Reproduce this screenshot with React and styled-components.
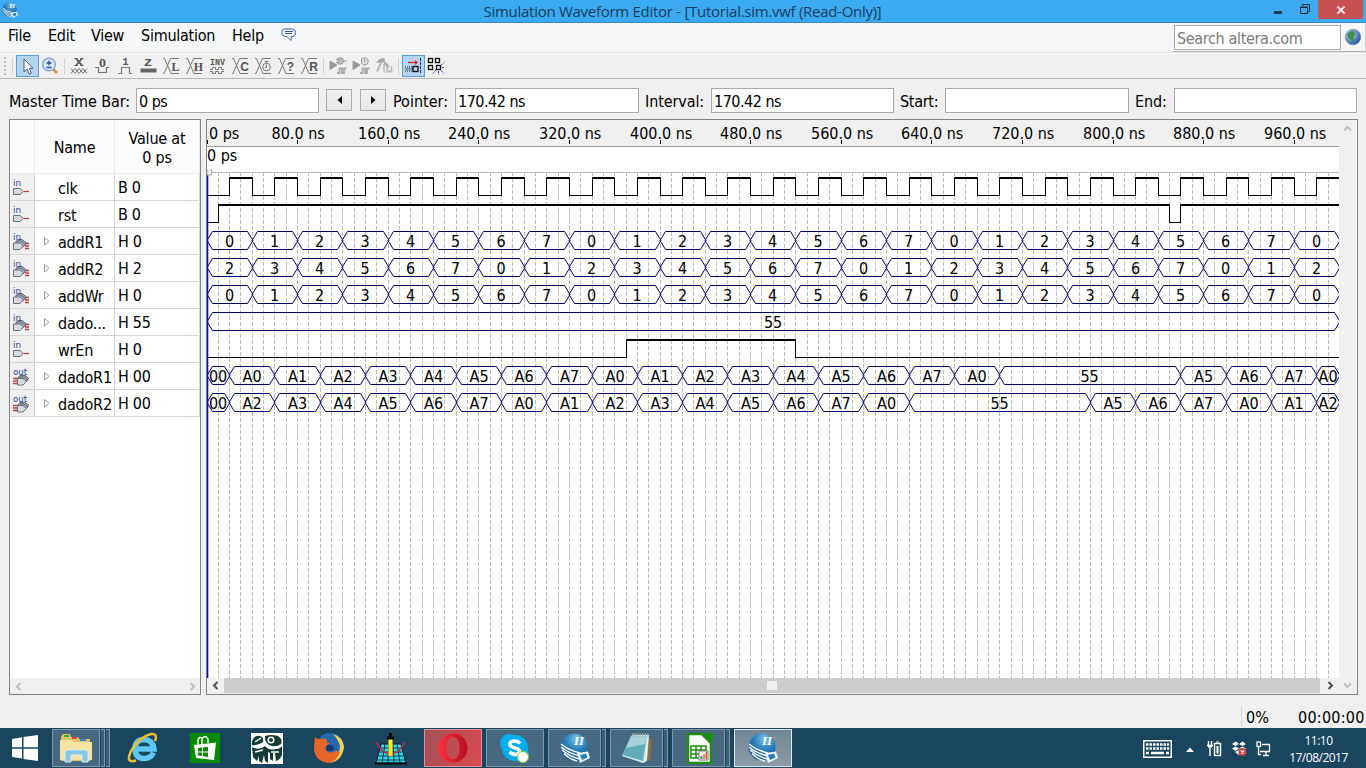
import React from "react";
import styled, { createGlobalStyle } from "styled-components";

const Global = createGlobalStyle`
  * { box-sizing: border-box; }
  body { margin: 0; overflow: hidden; }
`;

const uiFont = `"DejaVu Sans Condensed", "DejaVu Sans", sans-serif`;
const shellFont = `"Open Sans", "Noto Sans", sans-serif`;

const Screen = styled.div`
  width: 1366px;
  height: 768px;
  display: flex;
  flex-direction: column;
  background: #f0f0f0;
  color: #000;
  font: 16px/20px ${uiFont};
  font-stretch: condensed;
  letter-spacing: -0.35px;
  white-space: nowrap;
  overflow: hidden;
`;

/* Title bar */
const TitleBar = styled.header`
  flex: none;
  height: 23px;
  display: flex;
  background: #3caaf0;
  border-bottom: 1px solid #3f86b4;
  padding: 0 3px 0 2px;
`;
const TitleIcon = styled.div`
  width: 98px;
  padding-top: 2px;
`;
const TitleText = styled.div`
  flex: 1;
  text-align: center;
  font: 15px/23px ${shellFont};
  letter-spacing: -0.28px;
  color: #183e5c;
`;
const WindowButtons = styled.div`
  display: flex;
  width: 98px;
  height: 19px;
`;
const WindowButton = styled.div`
  width: ${(p) => p.$w}px;
  background: ${(p) => (p.$close ? "#c75050" : "transparent")};
  display: flex;
  align-items: center;
  justify-content: center;
`;

/* Menu bar */
const MenuBar = styled.nav`
  flex: none;
  height: 31px;
  display: flex;
  background: #f5f6f7;
  border-bottom: 1px solid #fff;
  box-shadow: inset 0 -1px #e3e4e6;
  padding-left: 8px;
`;
const MenuItem = styled.span`
  width: ${(p) => p.$w}px;
  line-height: 25px;
  letter-spacing: -0.25px;
`;
const MenuIcon = styled.span`
  width: 20px;
  padding-top: 5px;
  line-height: 0;
`;
const SearchDock = styled.div`
  margin-left: auto;
  width: 194px;
  height: 29px;
  display: flex;
  padding: 2px 0 0 2px;
  border-bottom: 1px solid #b4b4b4;
  border-right: 1px solid #c8c8c8;
`;
const SearchInput = styled.div`
  width: 167px;
  height: 25px;
  margin-right: 3px;
  padding-left: 2px;
  background: #fff;
  border: 1px solid #a8a8a8;
  color: #7b7b7b;
  line-height: 25px;
`;
const SearchIcon = styled.div`
  padding-top: 3px;
  line-height: 0;
`;

/* Tool bar */
const ToolBar = styled.div`
  flex: none;
  height: 25px;
  display: flex;
  border-bottom: 1px solid #b8b8b8;
  padding: 1px 0 1px 4px;
`;
const Grip = styled.div`
  width: 2px;
  height: 19px;
  margin: 2px 6px 0 0;
  background: repeating-linear-gradient(#bcbcbc 0 2px, transparent 2px 4px);
`;
const Separator = styled.div`
  width: 1px;
  height: 17px;
  background: #d2d2d2;
  margin: 3px ${(p) => p.$r}px 0 ${(p) => p.$l}px;
`;
const Tool = styled.div`
  width: 23px;
  height: 22px;
  display: flex;
  align-items: center;
  justify-content: center;
  background: ${(p) => (p.$on ? "#b5d4f0" : "transparent")};
  border: 1px solid ${(p) => (p.$on ? "#5f9ed2" : "transparent")};
`;
const GlyphBox = styled.svg`
  flex: none;
`;

/* Time parameters */
const TimeBar = styled.div`
  flex: none;
  height: 40px;
  display: flex;
  align-items: flex-start;
  padding: 9px 9px 0;
`;
const FieldLabel = styled.label`
  width: ${(p) => p.$w}px;
  line-height: 27px;
  letter-spacing: ${(p) => p.$ls || "-0.1px"};
`;
const Field = styled.div`
  width: ${(p) => p.$w || 184}px;
  height: 25px;
  margin-right: ${(p) => p.$gap ?? 6}px;
  padding-left: 2px;
  line-height: 25px;
  letter-spacing: -0.5px;
  background: #fff;
  border: 1px solid #a9a9ab;
`;
const StepButton = styled.div`
  width: 26px;
  height: 22px;
  margin: 1px ${(p) => p.$gap}px 0 0;
  display: flex;
  align-items: center;
  justify-content: center;
  border: 1px solid #acacac;
  background: linear-gradient(#f1f1f1, #e6e6e6);
`;

/* Main area */
const Workspace = styled.main`
  flex: none;
  height: 576px;
  display: flex;
  gap: 5px;
  padding: 0 8px 0 9px;
`;
const Panel = styled.section`
  width: ${(p) => p.$w}px;
  height: 576px;
  display: flex;
  flex-direction: column;
  border: 1px solid #828487;
  background: #fff;
`;
const NodeGrid = styled.div`
  height: 558px;
`;
const HeadRow = styled.div`
  display: flex;
  height: 54px;
  background: #fcfcfc;
  border-bottom: 1px solid #ececec;
`;
const HeadCell = styled.div`
  width: ${(p) => p.$w}px;
  display: flex;
  align-items: center;
  justify-content: center;
  text-align: center;
  line-height: 19px;
  letter-spacing: -0.2px;
  border-right: 1px solid #e6eaf2;
  padding-top: 2px;
`;
const NodeRow = styled.div`
  display: flex;
  height: 27px;
  border-bottom: 1px solid #d5d5d5;
`;
const IconCell = styled.div`
  width: 25px;
  padding: 2px 0 0 3px;
  line-height: 0;
  background: #f0f0f0;
  border-right: 1px solid #d5d5d5;
`;
const NameCell = styled.div`
  width: 80px;
  display: flex;
  align-items: center;
  border-right: 1px solid #d5d5d5;
  padding-top: 3px;
  letter-spacing: -0.2px;
`;
const Expander = styled.span`
  width: 23px;
  height: 20px;
  padding: 4px 0 0 9px;
  line-height: 0;
`;
const ValueCell = styled.div`
  width: 85px;
  padding: 4px 0 0 3px;
  letter-spacing: -0.3px;
  border-right: 1px solid #d5d5d5;
`;
const HScroll = styled.div`
  height: 15px;
  display: flex;
  align-items: center;
  justify-content: space-between;
  background: #f0f0f0;
`;
const HThumb = styled.div`
  width: 1096px;
  height: 15px;
  background: #cdcdcd;
  display: flex;
  align-items: center;
  justify-content: center;
`;
const ThumbGrip = styled.i`
  width: 10px;
  height: 9px;
  background: #f0f0f0;
`;
const ScrollArrow = styled.span`
  width: ${(p) => p.$w || 16}px;
  height: 15px;
  display: flex;
  align-items: center;
  justify-content: center;
`;
const WaveArea = styled.div`
  display: flex;
  height: 558px;
`;
const VScroll = styled.div`
  width: 17px;
  height: 558px;
  padding-top: 1px;
  background: #f0f0f0;
  display: flex;
  flex-direction: column;
  align-items: center;
`;
const BottomScroll = styled.div`
  display: flex;
  height: 16px;
  background: #f0f0f0;
`;

/* Status bar */
const StatusBar = styled.footer`
  flex: none;
  height: 33px;
  display: flex;
  justify-content: flex-end;
  padding-top: 11px;
`;
const StatusCell = styled.div`
  width: ${(p) => p.$w}px;
  height: 20px;
  padding: 2px 0 0 4px;
  border-left: ${(p) => (p.$line ? "1px solid #d5d5d5" : "0")};
  letter-spacing: ${(p) => p.$ls};
`;

/* Task bar */
const TaskBar = styled.footer`
  flex: none;
  height: 40px;
  display: flex;
  background: #19455f;
`;
const StartButton = styled.div`
  width: 50px;
  padding: 6px 0 0 11px;
`;
const Slot = styled.div`
  width: 62px;
  height: 40px;
  padding: 1px 2px;
  display: flex;
  gap: 1px;
`;
const faces = {
  plain: ["transparent", "transparent"],
  open: ["#466880", "#7f98a8"],
  red: ["linear-gradient(110deg, #a45058, #d94b50)", "#e09095"],
  active: ["linear-gradient(#718694, #8b9ba6)", "#e2e9ed"],
};
const Face = styled.div`
  flex: 1;
  height: 38px;
  display: flex;
  align-items: center;
  justify-content: center;
  background: ${(p) => faces[p.$kind][0]};
  border: 1px solid ${(p) => faces[p.$kind][1]};
`;
const Stack = styled.div`
  width: 4px;
  height: 38px;
  background: #3b5f77;
  border: 1px solid #7f98a8;
  border-left: 0;
`;
const Tray = styled.div`
  margin-left: auto;
  width: 223px;
  display: flex;
  align-items: center;
`;
const TrayIcon = styled.div`
  width: ${(p) => p.$w}px;
  line-height: 0;
  padding-top: 2px;
`;
const Clock = styled.div`
  width: 75px;
  margin-left: 3px;
  text-align: center;
  color: #fff;
  font: 12px/17px ${shellFont};
  letter-spacing: -0.5px;
  padding-top: 2px;
`;

/* ---------- icons ---------- */
const QuartusLogo = ({ size = 30 }) => (
  <svg width={size} height={size} viewBox="0 0 30 30">
    <defs>
      <radialGradient id="qb" cx="60%" cy="20%" r="80%">
        <stop offset="0" stopColor="#7cc4ea" />
        <stop offset="0.5" stopColor="#2c7fbd" />
        <stop offset="1" stopColor="#135590" />
      </radialGradient>
    </defs>
    <circle cx="14" cy="14" r="13.500" fill="url(#qb)" />
    <g fill="none" stroke="#fff" strokeWidth="1.500">
      <path d="M1 11 Q8 17 20 20" />
      <path d="M1 14 Q8 20 20 23" />
      <path d="M2 17 Q9 23 19 26" />
      <path d="M4 20.500 Q9 26 17 28" />
    </g>
    <path d="M17 20 L28 18.500 L30 25 L20 30 Z" fill="#e9f2f8" />
    <path d="M20 22 L26 20.500 L27.500 24.500 L22 27 Z" fill="#2b7fb9" />
    <text x="14" y="12" fontFamily="Liberation Serif, serif" fontStyle="italic" fontWeight="bold" fontSize="13" fill="#fff" letterSpacing="0">II</text>
  </svg>
);

const chevrons = {
  left: "M6.500 1 L3 4.500 L6.500 8",
  right: "M2.500 1 L6 4.500 L2.500 8",
  up: "M1 6.500 L4.500 3 L8 6.500",
  down: "M1 2.500 L4.500 6 L8 2.500",
};
const Chevron = ({ dir, color }) => (
  <svg width="9" height="9" viewBox="0 0 9 9">
    <path d={chevrons[dir]} fill="none" stroke={color} strokeWidth="2" />
  </svg>
);

const Glyph = ({ children }) => (
  <GlyphBox width="19" height="20" viewBox="0 -1 19 20" fill="none" stroke="#777" strokeWidth="1">
    {children}
  </GlyphBox>
);
const GText = ({ x, y, s = 10, w, face = "Liberation Mono, monospace", children }) => (
  <text x={x} y={y} fontSize={s} textAnchor="middle" fontFamily={face} fontWeight="bold" letterSpacing="0" textLength={w} lengthAdjust="spacingAndGlyphs" fill="#555" stroke="none">
    {children}
  </text>
);
const XLetter = ({ children, serif }) => (
  <Glyph>
    <path d="M1 1.500 H2.500 L9 16.500 M8.500 1.500 L2 16.500 H1 M8.500 1.500 H17 M9 16.500 H17" />
    {typeof children === "string" ? (
      <GText x={13.500} y={13.500} s={12} face={serif ? "Liberation Serif, serif" : "Liberation Sans, sans-serif"}>{children}</GText>
    ) : (
      children
    )}
  </Glyph>
);

const CursorTool = () => (
  <Glyph>
    <path d="M6 2 V15 L9.200 12 L11.200 17 L13.300 16 L11.200 11.300 H15 Z" fill="#fff" stroke="#4e5a78" />
  </Glyph>
);
const ZoomTool = () => (
  <Glyph>
    <path d="M11.500 11.500 L16 16" stroke="#d29a4c" strokeWidth="3" />
    <circle cx="8" cy="7.500" r="6.300" fill="#d9ebff" stroke="#83a9df" strokeWidth="1.500" />
    <path d="M8 3.500 V8.500 M5.500 6 H10.500 M5.500 10.500 H10.500" stroke="#27499c" strokeWidth="1.300" />
  </Glyph>
);
const UnknownTool = () => (
  <Glyph>
    <path d="M6 1.500 L12 8.500 M12 1.500 L6 8.500" stroke="#555" strokeWidth="1.800" />
    <path d="M4.500 1.500 H7.500 M10.500 1.500 H13.500 M4.500 8.500 H7.500 M10.500 8.500 H13.500" stroke="#555" />
    <path d="M1 11.500 L5 16.500 L9 11.500 L13 16.500 L17 11.500 M1 16.500 L5 11.500 L9 16.500 L13 11.500 L17 16.500" />
  </Glyph>
);
const LowTool = () => (
  <Glyph>
    <GText x={9.500} y={10} s={12} face="Liberation Serif, serif" w={7}>0</GText>
    <path d="M2 10.500 H5.500 V15.500 H13.500 V10.500 H16" strokeWidth="1.200" />
  </Glyph>
);
const HighTool = () => (
  <Glyph>
    <GText x={9.500} y={8} s={10}>1</GText>
    <path d="M2 16.500 H5.500 V10.500 H13.500 V16.500 H16" strokeWidth="1.200" />
  </Glyph>
);
const ZTool = () => (
  <Glyph>
    <GText x={9} y={9} s={11} w={8}>Z</GText>
    <rect x="1.500" y="11.500" width="16" height="4" fill="#666" stroke="none" />
  </Glyph>
);
const InvTool = () => (
  <Glyph>
    <GText x={9.500} y={7.500} s={9} w={15}>INV</GText>
    <path d="M2 12.500 H4.500 V10.500 H7.500 V12.500 H10.500 V10.500 H13.500 V12.500 H16 M2 14.500 H4.500 V16.500 H7.500 V14.500 H10.500 V16.500 H13.500 V14.500 H16" />
  </Glyph>
);
const MiniClock = () => (
  <g>
    <circle cx="12.500" cy="10" r="3.800" />
    <path d="M12.500 4 V6 M10.500 4.500 H14.500 M12.500 7.500 V10.500 H11" />
  </g>
);
const RunTool = ({ kind }) => (
  <Glyph>
    <path d="M1 4 L8 8 L1 12.500 Z" fill="#999" stroke="#999" />
    <path d="M8 16 H10.500 V11.500 H13 V16 H15 V11.500 H17.500" stroke="#aaa" strokeWidth="1.800" />
    {kind === "clock" ? (
      <path d="M9.500 2 L11.500 1 H14.500 L16 2.500 V6 L14 8 H11.500 L9.500 6 Z M12.500 2.500 V5" fill="#ddd" stroke="#999" />
    ) : (
      <path d="M9 1 H13 L15 4 L13 7 H9 Z M7 2.500 H9 M7 5.500 H9 M15 4 H18" fill="#bbb" stroke="#999" />
    )}
  </Glyph>
);
const HammerTool = () => (
  <Glyph>
    <path d="M2 5.500 L4 3 L7.500 1.500 L10 2.500 L7 5 Z" fill="#a5a5a5" stroke="#a5a5a5" />
    <path d="M6.500 5 L2 14.500" stroke="#b5b5b5" strokeWidth="2" />
    <path d="M9 15.500 V8 H12.500 M12 8 V14.500 H16.500 V9" stroke="#c0c0c0" strokeWidth="1.800" />
    <path d="M8 4 L14 10" stroke="#aaa" strokeWidth="2" />
  </Glyph>
);
const SnapTool = () => (
  <Glyph>
    <path d="M4 5.500 H12" stroke="#d82020" strokeWidth="1.300" />
    <path d="M11 3 L14 5.500 L11 8 Z" fill="#d82020" stroke="none" />
    <path d="M1 10 H9 M1 14 H9" stroke="#222" strokeDasharray="1 1" />
    <path d="M1.500 12 H9" stroke="#222" strokeDasharray="2 1" />
    <rect x="9" y="9.500" width="5" height="5" stroke="#111" strokeWidth="1.300" />
    <path d="M16.500 1 V17" stroke="#1b2bb0" strokeDasharray="3 1" />
  </Glyph>
);
const GroupTool = () => (
  <Glyph>
    <g stroke="#111" strokeWidth="1.300">
      <rect x="1.500" y="1.500" width="4" height="4" />
      <rect x="8.500" y="1.500" width="4" height="4" />
      <rect x="1.500" y="8.500" width="4" height="4" />
      <rect x="9.500" y="8.500" width="4" height="4" />
    </g>
    <path d="M14.500 8 L17.500 5 M15 10.500 H18 M14 13.500 L17 16.500 M11.500 14 V17.500 M9 13 L6 16.500" stroke="#24329c" strokeDasharray="2 1" />
  </Glyph>
);
const Balloon = () => (
  <svg width="16" height="15" viewBox="0 0 16 15">
    <path d="M3.500 1 H11.500 Q14.500 1 14.500 4.500 Q14.500 8 12 8.500 H10.500 L10 12.500 L6 8.500 H4 Q0.700 8 0.700 4.500 Q0.700 1 3.500 1 Z" fill="#e9effb" stroke="#5068a0" />
    <path d="M4 3.500 H12 M4 5.500 H11" stroke="#33539c" strokeWidth="1.200" />
  </svg>
);
const Globe = () => (
  <svg width="18" height="18" viewBox="0 0 18 18">
    <defs>
      <radialGradient id="gl" cx="30%" cy="30%" r="75%">
        <stop offset="0" stopColor="#c3dcfa" />
        <stop offset="1" stopColor="#2c55ae" />
      </radialGradient>
    </defs>
    <circle cx="9" cy="9" r="7.800" fill="url(#gl)" stroke="#5a76b5" strokeWidth="0.500" />
    <path d="M3 6 Q6 2 10 3 L11 6 L9.500 9 L10 14 L8.500 15.500 L7 12 L4 10 Z" fill="#429046" />
  </svg>
);
const PinIcon = ({ kind }) => {
  const out = kind === "out";
  const bus = kind === "bus";
  return (
    <svg width="20" height="23" viewBox="0 -4 20 23">
      {bus && <path d="M12 9.500 H16 M12 12 H16 M12 14.500 H16" stroke="#c23a3a" strokeWidth="1.300" />}
      {out && <path d="M0 9.500 H5 M0 12 H5 M0 14.500 H5" stroke="#c23a3a" strokeWidth="1.300" />}
      {kind === "in" && <path d="M11 11.500 H16" stroke="#c23a3a" strokeWidth="1.200" />}
      {bus && (
        <g fill="#a8b0b9" stroke="#5a6570">
          <path d="M5 5.500 H9 L13.500 9 L10 12 H5 Z" />
          <path d="M3 7 H8 L12.500 10.500 L9 13.500 H3 Z" />
        </g>
      )}
      {out && (
        <g fill="#a8b0b9" stroke="#5a6570">
          <path d="M7 6.500 H12 L16 9.500 L12 13 H7 Z" />
          <path d="M5.500 8 H11 L15 11 L11 14.500 H5.500 Z" />
        </g>
      )}
      <path
        d={out ? "M4.500 9.500 H10 L13.500 12.500 L10 16 H4.500 Z" : bus ? "M0.500 9 H7 L10.500 12 L7 15.500 H0.500 Z" : "M0.500 8.500 H7 L10.500 11.500 L7 14.500 H0.500 Z"}
        fill="#d5dae0"
        stroke="#66707c"
      />
      <text x="0" y="6" fontSize="9" fontFamily="DejaVu Sans, sans-serif" letterSpacing="0" textLength={out ? 14 : 8} lengthAdjust="spacingAndGlyphs" fill="#23449c">
        {out ? "out" : "in"}
      </text>
    </svg>
  );
};

/* ---------- waveform ---------- */
const STEP = 11.325;
const END = 100;
const xAt = (k) => (k >= END ? 1132 : Math.floor(k * STEP)) + 0.5;
const hex = (n) => Array.from({ length: 25 }, (_, i) => [i * 4, String((i + n) % 8)]);
const seq = (count, first) => Array.from({ length: count }, (_, i) => [2 + i * 4, "A" + ((i + first) % 8)]);

const signals = [
  { name: "clk", value: "B 0", pin: "in", levels: Array.from({ length: 50 }, (_, i) => [i * 2, i % 2]) },
  { name: "rst", value: "B 0", pin: "in", levels: [[0, 0], [1, 1], [85, 0], [86, 1]] },
  { name: "addR1", value: "H 0", pin: "bus", bus: hex(0) },
  { name: "addR2", value: "H 2", pin: "bus", bus: hex(2) },
  { name: "addWr", value: "H 0", pin: "bus", bus: hex(0) },
  { name: "dado...", value: "H 55", pin: "bus", bus: [[0, "55"]] },
  { name: "wrEn", value: "H 0", pin: "in", levels: [[0, 0], [37, 1], [52, 0]] },
  { name: "dadoR1", value: "H 00", pin: "out", bus: [[0, "00"], ...seq(17, 0), [70, "55"], [86, "A5"], [90, "A6"], [94, "A7"], [98, "A0"]] },
  { name: "dadoR2", value: "H 00", pin: "out", bus: [[0, "00"], ...seq(15, 2), [62, "55"], [78, "A5"], [82, "A6"], [86, "A7"], [90, "A0"], [94, "A1"], [98, "A2"]] },
];

const LevelTrace = ({ levels, top }) => (
  <g shapeRendering="crispEdges" stroke="#000">
    {levels.map(([k, v], i) => {
      const x1 = xAt(k);
      const x2 = xAt(levels[i + 1] ? levels[i + 1][0] : END);
      return (
        <React.Fragment key={k}>
          {i > 0 && <path d={`M${x1} ${top} V${top + 19}`} />}
          {v ? <path d={`M${x1 - 0.5} ${top + 1} H${x2 + 0.5}`} strokeWidth="2" /> : <path d={`M${x1} ${top + 18.5} H${x2}`} />}
        </React.Fragment>
      );
    })}
  </g>
);

const BusTrace = ({ bus, top }) => (
  <g>
    {bus.map(([k, label], i) => {
      const a = xAt(k);
      const b = xAt(bus[i + 1] ? bus[i + 1][0] : END);
      const t = top + 0.5;
      const wide = label[0] === "A";
      return (
        <React.Fragment key={k}>
          <path
            d={`M${a - 0.5} ${t + 9} L${a + 5} ${t} H${b - 5} L${b + 0.5} ${t + 9} L${b - 5} ${t + 18} H${a + 5} Z`}
            fill="none"
            stroke="#000068"
          />
          <text x={(a + b) / 2 + (wide ? 0.2 : -0.5)} y={top + 16} textAnchor="middle" fontSize="16" letterSpacing={wide ? 0.1 : -0.15}>{label}</text>
        </React.Fragment>
      );
    })}
  </g>
);

const Waveform = () => (
  <svg width="1132" height="558" viewBox="0 0 1132 558">
    <rect width="1132" height="27" fill="#f0f0f0" />
    <path d="M0 26.500 H1132" stroke="#9a9a9a" />
    <path d="M0 52.500 H1132" stroke="#b8b8b8" />
    {Array.from({ length: 99 }, (_, i) => (
      <path key={i} d={`M${xAt(i + 1)} 52 V558`} stroke="#bdbdbd" strokeDasharray="4 2" />
    ))}
    {Array.from({ length: 13 }, (_, i) => (
      <React.Fragment key={i}>
        <path d={`M${xAt(i * 8)} 20 V24`} stroke="#000" />
        <text x={i ? xAt(i * 8) + 0.5 : 2} y="19" textAnchor={i ? "middle" : "start"} fontSize="16" textLength={i ? (i === 1 ? 53 : 62) : 30}>
          {i ? `${i * 80}.0 ns` : "0 ps"}
        </text>
      </React.Fragment>
    ))}
    <text x="0" y="41" fontSize="16" textLength="30">0 ps</text>
    {signals.map((s, i) =>
      s.bus ? <BusTrace key={s.name} bus={s.bus} top={57 + i * 27} /> : <LevelTrace key={s.name} levels={s.levels} top={57 + i * 27} />
    )}
    <rect x="0" y="54" width="1.300" height="504" fill="#0000cc" />
    <path d="M0 49 V55 H4.500 V49" fill="#f0f0f0" stroke="#aaa" />
  </svg>
);

/* ---------- task bar drawings ---------- */
const Explorer = () => (
  <svg width="34" height="32" viewBox="0 0 34 32">
    <path d="M2 5 L4 2 H11 L12 5 H19 L20 7 H31 V29 H2 Z" fill="#e3c26c" />
    <path d="M5 3 H10 V5 H5 Z" fill="#3aa83c" /><path d="M13 5 H18 V7 H13 Z" fill="#d24a3a" /><path d="M21 7 H27 V9 H21 Z" fill="#3e87cc" />
    <path d="M1 8 H12 L15 10 H33 V28 H1 Z" fill="#f6e3a2" />
    <path d="M6 20 Q6 18 9 18 H26 Q29 18 29 20 V30 H23 V23 H12 V30 H6 Z" fill="#86c6e6" stroke="#d7f0fb" />
  </svg>
);
const InternetExplorer = () => (
  <svg width="32" height="32" viewBox="0 0 32 32">
    <path d="M26.500 20.500 Q24 26.500 17 26.500 Q8 26 8 16.500 Q8.500 7.500 17 7.500 Q26 8 27 17 H10" fill="none" stroke="#5ec7f5" strokeWidth="5.500" />
    <path d="M28 9 Q31 1 24 2 Q12 5 4 19 Q-2 32 9 28.500" fill="none" stroke="#eebd2c" strokeWidth="2.500" />
  </svg>
);
const Store = () => (
  <svg width="30" height="30" viewBox="0 0 30 30">
    <rect width="30" height="30" fill="#088a00" />
    <path d="M8 12 V7 Q9 3 12 5 V11 M12 11 V6 Q15 1 18 6 V10" fill="none" stroke="#fff" strokeWidth="1.400" />
    <path d="M4 12 L26 9.500 L24 27 L6 25 Z" fill="#fff" />
    <path d="M8 15 L12 14.500 V18.500 H8 Z M13 14.400 L18 13.800 V18.500 H13 Z M8 19.500 H12 V23 L8 22.500 Z M13 19.500 H18 V24 L13 23.300 Z" fill="#088a00" />
  </svg>
);
const Mask = () => (
  <svg width="32" height="31" viewBox="0 0 32 31">
    <rect width="32" height="31" fill="#fff" />
    <g fill="#153c36">
      <path d="M1 8 Q3 2 9 3 Q13 4 12 9 Q7 13 1 12 Z" />
      <path d="M14 3 Q20 1 27 3 Q32 6 30 11 Q25 15 18 12 Q13 8 14 3 Z" />
      <path d="M1 14 Q8 18 14 13 Q18 18 25 16 Q29 16 31 13 V22 Q29 27 25 28 L24 20 H22 V28 L19 26 V20 L17 19 V30 L14 28 L13 22 L11 30 L8 28 V23 L6 28 L2 24 Z" />
    </g>
    <circle cx="20" cy="7" r="3.500" fill="#fff" /><circle cx="20" cy="7" r="2" fill="#153c36" />
    <path d="M4 9 L10 5 M4 19 L12 17 M20 19 H28" stroke="#fff" strokeWidth="1.300" />
  </svg>
);
const Firefox = () => (
  <svg width="32" height="32" viewBox="0 0 32 32">
    <circle cx="17" cy="15" r="14" fill="#2369ad" />
    <path d="M20 2 Q30 5 31 15 Q29 29 17 31 Q27 24 27 14 Q25 7 20 2 Z" fill="#f8cf49" />
    <path d="M2 5 Q5 8 8 7 Q12 5 14 8 Q13 11 17 11 Q13 14 12 16 Q14 22 20 20 Q24 18 27 20 Q24 30 15 31 Q2 29 1 17 Q1 11 2 5 Z" fill="#e8652a" />
    <path d="M14 13 Q21 12 21 17 Q18 21 13 18 Z" fill="#173b70" />
  </svg>
);
const Pen = () => (
  <svg width="34" height="33" viewBox="0 0 34 33">
    <path d="M7 12 H27 L32 31 H2 Z" fill="#35d7e8" stroke="#071b24" />
    <path d="M6 16 H28 M5 20 H29 M4 24 H30 M3 28 H31 M11 12 L8 31 M15 12 L14 31 M19 12 L20 31 M23 12 L26 31" stroke="#092a3d" strokeWidth="0.900" />
    <path d="M2 10 L8 19 L16 23 L25 19 L31 10" fill="none" stroke="#c22648" strokeWidth="1.500" />
    <rect x="14.500" y="7" width="4" height="17" fill="#f7eb19" stroke="#b5ad18" strokeWidth="0.500" />
    <path d="M13 6 H20 M16.500 1 V7" stroke="#050505" strokeWidth="3" />
    <path d="M1 31.500 H33" stroke="#000" strokeWidth="2" />
  </svg>
);
const Opera = () => (
  <svg width="30" height="30" viewBox="0 0 30 30">
    <defs><linearGradient id="op" x1="0" x2="1"><stop offset="0" stopColor="#ff3140" /><stop offset="1" stopColor="#b50d22" /></linearGradient></defs>
    <path fillRule="evenodd" d="M15 0.500 A14.500 14.500 0 1 0 15 29.500 A14.500 14.500 0 1 0 15 0.500 M15 4 C20 4 21.500 9 21.500 15 C21.500 21 20 26 15 26 C10 26 8.500 21 8.500 15 C8.500 9 10 4 15 4" fill="url(#op)" />
  </svg>
);
const Skype = () => (
  <svg width="32" height="31" viewBox="0 0 32 31">
    <circle cx="10" cy="10" r="9" fill="#00aff0" /><circle cx="16" cy="15" r="13" fill="#00aff0" /><circle cx="22" cy="21" r="8" fill="#00aff0" />
    <path d="M21 10.500 Q19 7.500 14.500 8 Q10 9 11 12 Q12 14 16 15 Q22 16.500 20 20 Q16 23.500 10.500 19" fill="none" stroke="#fff" strokeWidth="3.600" />
    <circle cx="24" cy="24" r="5.500" fill="#fff" stroke="#90c42c" />
  </svg>
);
const Notepad = () => (
  <svg width="32" height="32" viewBox="0 0 32 32">
    <path d="M27 5 L31 8 L29 28 L26 29 Z" fill="#8f6b46" />
    <path d="M11 3 H28 L26 29 L22 31 L1 24 Z" fill="#d9eef0" />
    <path d="M10 4 H26 L22 29 L1 23 Z" fill="#63adb9" />
    <path d="M10 4 H26 L24 12 L5 16 Z" fill="#a6d2d9" />
    <path d="M11 3 H28" stroke="#a9b5ba" strokeWidth="3" strokeDasharray="1.500 1" />
  </svg>
);
const Calc = () => (
  <svg width="30" height="32" viewBox="0 0 30 32">
    <path d="M4 2 H18 L27 11 V31 H4 Z" fill="#fafafa" stroke="#218c13" strokeWidth="2.500" />
    <path d="M20 1 H29 V8 L25 9 Z" fill="#18910f" />
    <path d="M7 14 H22 V26 H7 Z M7 18 H22 M7 22 H22 M12 14 V26 M17 14 V26" fill="none" stroke="#218c13" strokeWidth="1.500" />
    <path d="M15 19 H24 V28 H15 Z" fill="#fff" stroke="#777" />
    <path d="M17.500 27 V24" stroke="#3a83c5" strokeWidth="2" /><path d="M20 27 V22" stroke="#e39b39" strokeWidth="2" /><path d="M22.300 27 V20" stroke="#d34b36" strokeWidth="1.500" />
  </svg>
);
const tasks = [
  { Icon: Explorer, kind: "open", stacks: 2 },
  { Icon: InternetExplorer, kind: "plain" },
  { Icon: Store, kind: "plain" },
  { Icon: Mask, kind: "plain" },
  { Icon: Firefox, kind: "plain" },
  { Icon: Pen, kind: "plain" },
  { Icon: Opera, kind: "red" },
  { Icon: Skype, kind: "open" },
  { Icon: QuartusLogo, kind: "open", stacks: 1 },
  { Icon: Notepad, kind: "open", stacks: 1 },
  { Icon: Calc, kind: "open", stacks: 1 },
  { Icon: QuartusLogo, kind: "active" },
];

export default function App() {
  return (
    <Screen>
      <Global />
      <TitleBar>
        <TitleIcon><QuartusLogo size={16} /></TitleIcon>
        <TitleText>Simulation Waveform Editor - [Tutorial.sim.vwf (Read-Only)]</TitleText>
        <WindowButtons>
          <WindowButton $w={26}><svg width="8" height="12"><path d="M0 8.500 H8" stroke="#1e2b36" strokeWidth="2.500" /></svg></WindowButton>
          <WindowButton $w={27}>
            <svg width="10" height="11" fill="none" stroke="#1e2b36"><path d="M0.500 3 H7.500 V9.500 H0.500 Z M0 3.500 H8" /><path d="M2.500 2 V0.500 H9.500 V7.500 H8" /></svg>
          </WindowButton>
          <WindowButton $w={45} $close><svg width="8" height="8"><path d="M0.500 0.500 L7.500 7.500 M7.500 0.500 L0.500 7.500" stroke="#fff" strokeWidth="1.700" /></svg></WindowButton>
        </WindowButtons>
      </TitleBar>

      <MenuBar>
        <MenuItem $w={40}>File</MenuItem>
        <MenuItem $w={43}>Edit</MenuItem>
        <MenuItem $w={50}>View</MenuItem>
        <MenuItem $w={91}>Simulation</MenuItem>
        <MenuItem $w={49}>Help</MenuItem>
        <MenuIcon><Balloon /></MenuIcon>
        <SearchDock>
          <SearchInput>Search altera.com</SearchInput>
          <SearchIcon><Globe /></SearchIcon>
        </SearchDock>
      </MenuBar>

      <ToolBar>
        <Grip />
        <Separator $l={0} $r={3} />
        <Tool $on><CursorTool /></Tool>
        <Tool><ZoomTool /></Tool>
        <Separator $l={2} $r={3} />
        <Tool><UnknownTool /></Tool>
        <Tool><LowTool /></Tool>
        <Tool><HighTool /></Tool>
        <Tool><ZTool /></Tool>
        <Tool><XLetter serif>L</XLetter></Tool>
        <Tool><XLetter serif>H</XLetter></Tool>
        <Tool><InvTool /></Tool>
        <Tool><XLetter>C</XLetter></Tool>
        <Tool><XLetter><MiniClock /></XLetter></Tool>
        <Tool><XLetter>?</XLetter></Tool>
        <Tool><XLetter>R</XLetter></Tool>
        <Separator $l={2} $r={3} />
        <Tool><RunTool kind="plug" /></Tool>
        <Tool><RunTool kind="clock" /></Tool>
        <Tool><HammerTool /></Tool>
        <Separator $l={2} $r={3} />
        <Tool $on><SnapTool /></Tool>
        <Tool><GroupTool /></Tool>
      </ToolBar>

      <TimeBar>
        <FieldLabel $w={127}>Master Time Bar:</FieldLabel>
        <Field $w={183} $gap={7}>0 ps</Field>
        <StepButton $gap={8}><svg width="5" height="8"><path d="M5 0 V8 L0.500 4 Z" /></svg></StepButton>
        <StepButton $gap={7}><svg width="5" height="8"><path d="M0 0 V8 L4.500 4 Z" /></svg></StepButton>
        <FieldLabel $w={62} $ls="0px">Pointer:</FieldLabel>
        <Field>170.42 ns</Field>
        <FieldLabel $w={66}>Interval:</FieldLabel>
        <Field $w={183}>170.42 ns</Field>
        <FieldLabel $w={45} $ls="-0.3px">Start:</FieldLabel>
        <Field />
        <FieldLabel $w={39}>End:</FieldLabel>
        <Field $w={183} $gap={0} />
      </TimeBar>

      <Workspace>
        <Panel $w={192}>
          <NodeGrid>
            <HeadRow>
              <HeadCell $w={25} />
              <HeadCell $w={80}>Name</HeadCell>
              <HeadCell $w={85}>Value at<br />0 ps</HeadCell>
            </HeadRow>
            {signals.map((s) => (
              <NodeRow key={s.name}>
                <IconCell><PinIcon kind={s.pin} /></IconCell>
                <NameCell>
                  <Expander>{s.bus && <svg width="6" height="9"><path d="M0.500 0.500 V8 L5 4.300 Z" fill="#fff" stroke="#9c9c9c" /></svg>}</Expander>
                  {s.name}
                </NameCell>
                <ValueCell>{s.value}</ValueCell>
              </NodeRow>
            ))}
          </NodeGrid>
          <BottomScroll as={HScroll}>
            <ScrollArrow><Chevron dir="left" color="#bfbfbf" /></ScrollArrow>
            <ScrollArrow><Chevron dir="right" color="#bfbfbf" /></ScrollArrow>
          </BottomScroll>
        </Panel>
        <Panel $w={1152}>
          <WaveArea>
            <Waveform />
            <VScroll><ScrollArrow><Chevron dir="up" color="#bfbfbf" /></ScrollArrow></VScroll>
          </WaveArea>
          <BottomScroll>
            <HScroll>
              <ScrollArrow $w={17}><Chevron dir="left" color="#505050" /></ScrollArrow>
              <HThumb><ThumbGrip /></HThumb>
              <ScrollArrow $w={20}><Chevron dir="right" color="#505050" /></ScrollArrow>
            </HScroll>
            <ScrollArrow $w={15}><Chevron dir="down" color="#bfbfbf" /></ScrollArrow>
          </BottomScroll>
        </Panel>
      </Workspace>

      <StatusBar>
        <StatusCell $w={53} $line $ls="0.100px">0%</StatusCell>
        <StatusCell $w={72} $ls="0.250px">00:00:00</StatusCell>
      </StatusBar>

      <TaskBar>
        <StartButton>
          <svg width="28" height="28"><path d="M1 5 L11 3.300 V13.300 H1 Z M12.500 3 L27 1 V13.300 H12.500 Z M1 14.700 H11 V24.600 L1 23 Z M12.500 14.700 H27 V27 L12.500 25 Z" fill="#fff" /></svg>
        </StartButton>
        {tasks.map(({ Icon, kind, stacks = 0 }, i) => (
          <Slot key={i}>
            <Face $kind={kind}><Icon /></Face>
            {Array.from({ length: stacks }, (_, j) => <Stack key={j} />)}
          </Slot>
        ))}
        <Tray>
          <TrayIcon $w={43}>
            <svg width="29" height="18">
              <rect x="0.750" y="0.750" width="27.500" height="16.500" fill="none" stroke="#fff" strokeWidth="1.500" />
              <path d="M3 4.500 H26 M3 8.500 H26" stroke="#fff" strokeWidth="2.500" strokeDasharray="2.500 1" />
              <path d="M3 13 H6 M8 13 H21 M23 13 H26" stroke="#fff" strokeWidth="2.500" />
            </svg>
          </TrayIcon>
          <TrayIcon $w={21}><svg width="8" height="5"><path d="M0 5 L4 0.500 L8 5 Z" fill="#fff" /></svg></TrayIcon>
          <TrayIcon $w={25}>
            <svg width="15" height="16" fill="none" stroke="#fff">
              <path d="M1.500 0 V4 M4.500 0 V4 M0 4.500 H6 M1 6 H5 M3 7 V15" strokeWidth="1.400" />
              <rect x="7.500" y="2.500" width="6" height="12" strokeWidth="1.400" /><path d="M9 1 H12" /><rect x="9.500" y="5" width="2" height="7.500" fill="#fff" stroke="none" />
            </svg>
          </TrayIcon>
          <TrayIcon $w={24}>
            <svg width="16" height="16">
              <path d="M3.500 0.500 L7 3 L3.500 5 L0 3 Z M10.500 0.500 L14 3 L10.500 5 L7 3 Z M3.500 5.500 L7 7.500 L3.500 10 L0 7.500 Z M10.500 5.500 L14 7.500 L10.500 10 L7 7.500 Z M3 11 L7 9 L9 11 L7 14 Z" fill="#fff" />
              <circle cx="10.500" cy="11" r="4" fill="#d43d42" /><path d="M9 9.500 L12 12.500 M12 9.500 L9 12.500" stroke="#fff" strokeWidth="1.200" />
            </svg>
          </TrayIcon>
          <TrayIcon $w={22}>
            <svg width="16" height="16" fill="none" stroke="#fff" strokeWidth="1.300">
              <path d="M6 3.500 H13.500 V10.500 H4 M10 11 V14 M7 14.500 H13 M2.500 6 V13.500 H5" /><rect x="1" y="1" width="3.500" height="4.500" />
            </svg>
          </TrayIcon>
          <Clock>11:10<br />17/08/2017</Clock>
        </Tray>
      </TaskBar>
    </Screen>
  );
}
